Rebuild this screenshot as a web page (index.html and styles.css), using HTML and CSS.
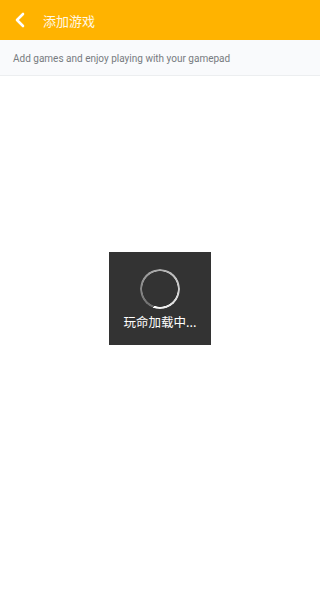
FILE: index.html
```html
<!DOCTYPE html>
<html>
<head>
<meta charset="utf-8">
<link rel="stylesheet" href="styles.css">
</head>
<body>
<div class="app">
  <header class="topbar">
    <span class="back">
      <svg width="12" height="16" viewBox="0 0 12 16"><path d="M9 2 L3 8 L9 14" fill="none" stroke="#fff" stroke-width="2.6" stroke-linecap="round" stroke-linejoin="round"/></svg>
    </span>
    <span class="title">添加游戏</span>
  </header>
  <div class="sub">Add games and enjoy playing with your gamepad</div>
  <main class="content">
    <div class="loader">
      <div class="spinner"></div>
      <div class="ltext">玩命加载中...</div>
    </div>
  </main>
</div>
</body>
</html>
```
FILE: styles.css
```css
html, body { margin: 0; padding: 0; }
body { width: 320px; height: 600px; background: #fff; font-family: Roboto, "Noto Sans CJK SC", sans-serif; overflow: hidden; }
.app { display: flex; flex-direction: column; height: 600px; }
.topbar { height: 40px; background: #ffb300; display: flex; align-items: center; box-sizing: border-box; padding-left: 14px; }
.back { width: 12px; height: 16px; display: flex; margin-right: 17px; }
.title { color: #fff8e6; font-size: 13px; font-family: "Noto Sans CJK SC", sans-serif; }
.sub { height: 36px; box-sizing: border-box; border-bottom: 1px solid #eceef0; background: #f9fafc; color: #777a80; font-size: 10px; display: flex; align-items: center; padding-left: 13px; padding-top: 1px; }
.content { flex: 1; display: flex; justify-content: center; padding-top: 176px; }
.loader { width: 102px; height: 93px; background: #333333; display: flex; flex-direction: column; align-items: center; box-sizing: border-box; padding-top: 17px; }
.spinner { width: 40px; height: 40px; border-radius: 50%; background: conic-gradient(from 200deg, #6a6a6a, #a8a8a8 40%, #e4e4e4 85%, #ffffff); -webkit-mask: radial-gradient(circle, transparent 17.5px, #000 18px); mask: radial-gradient(circle, transparent 17.5px, #000 18px); }
.ltext { color: #fff; font-size: 12.5px; font-family: "Noto Sans CJK SC", sans-serif; margin-top: 3px; line-height: 19px; }
```
